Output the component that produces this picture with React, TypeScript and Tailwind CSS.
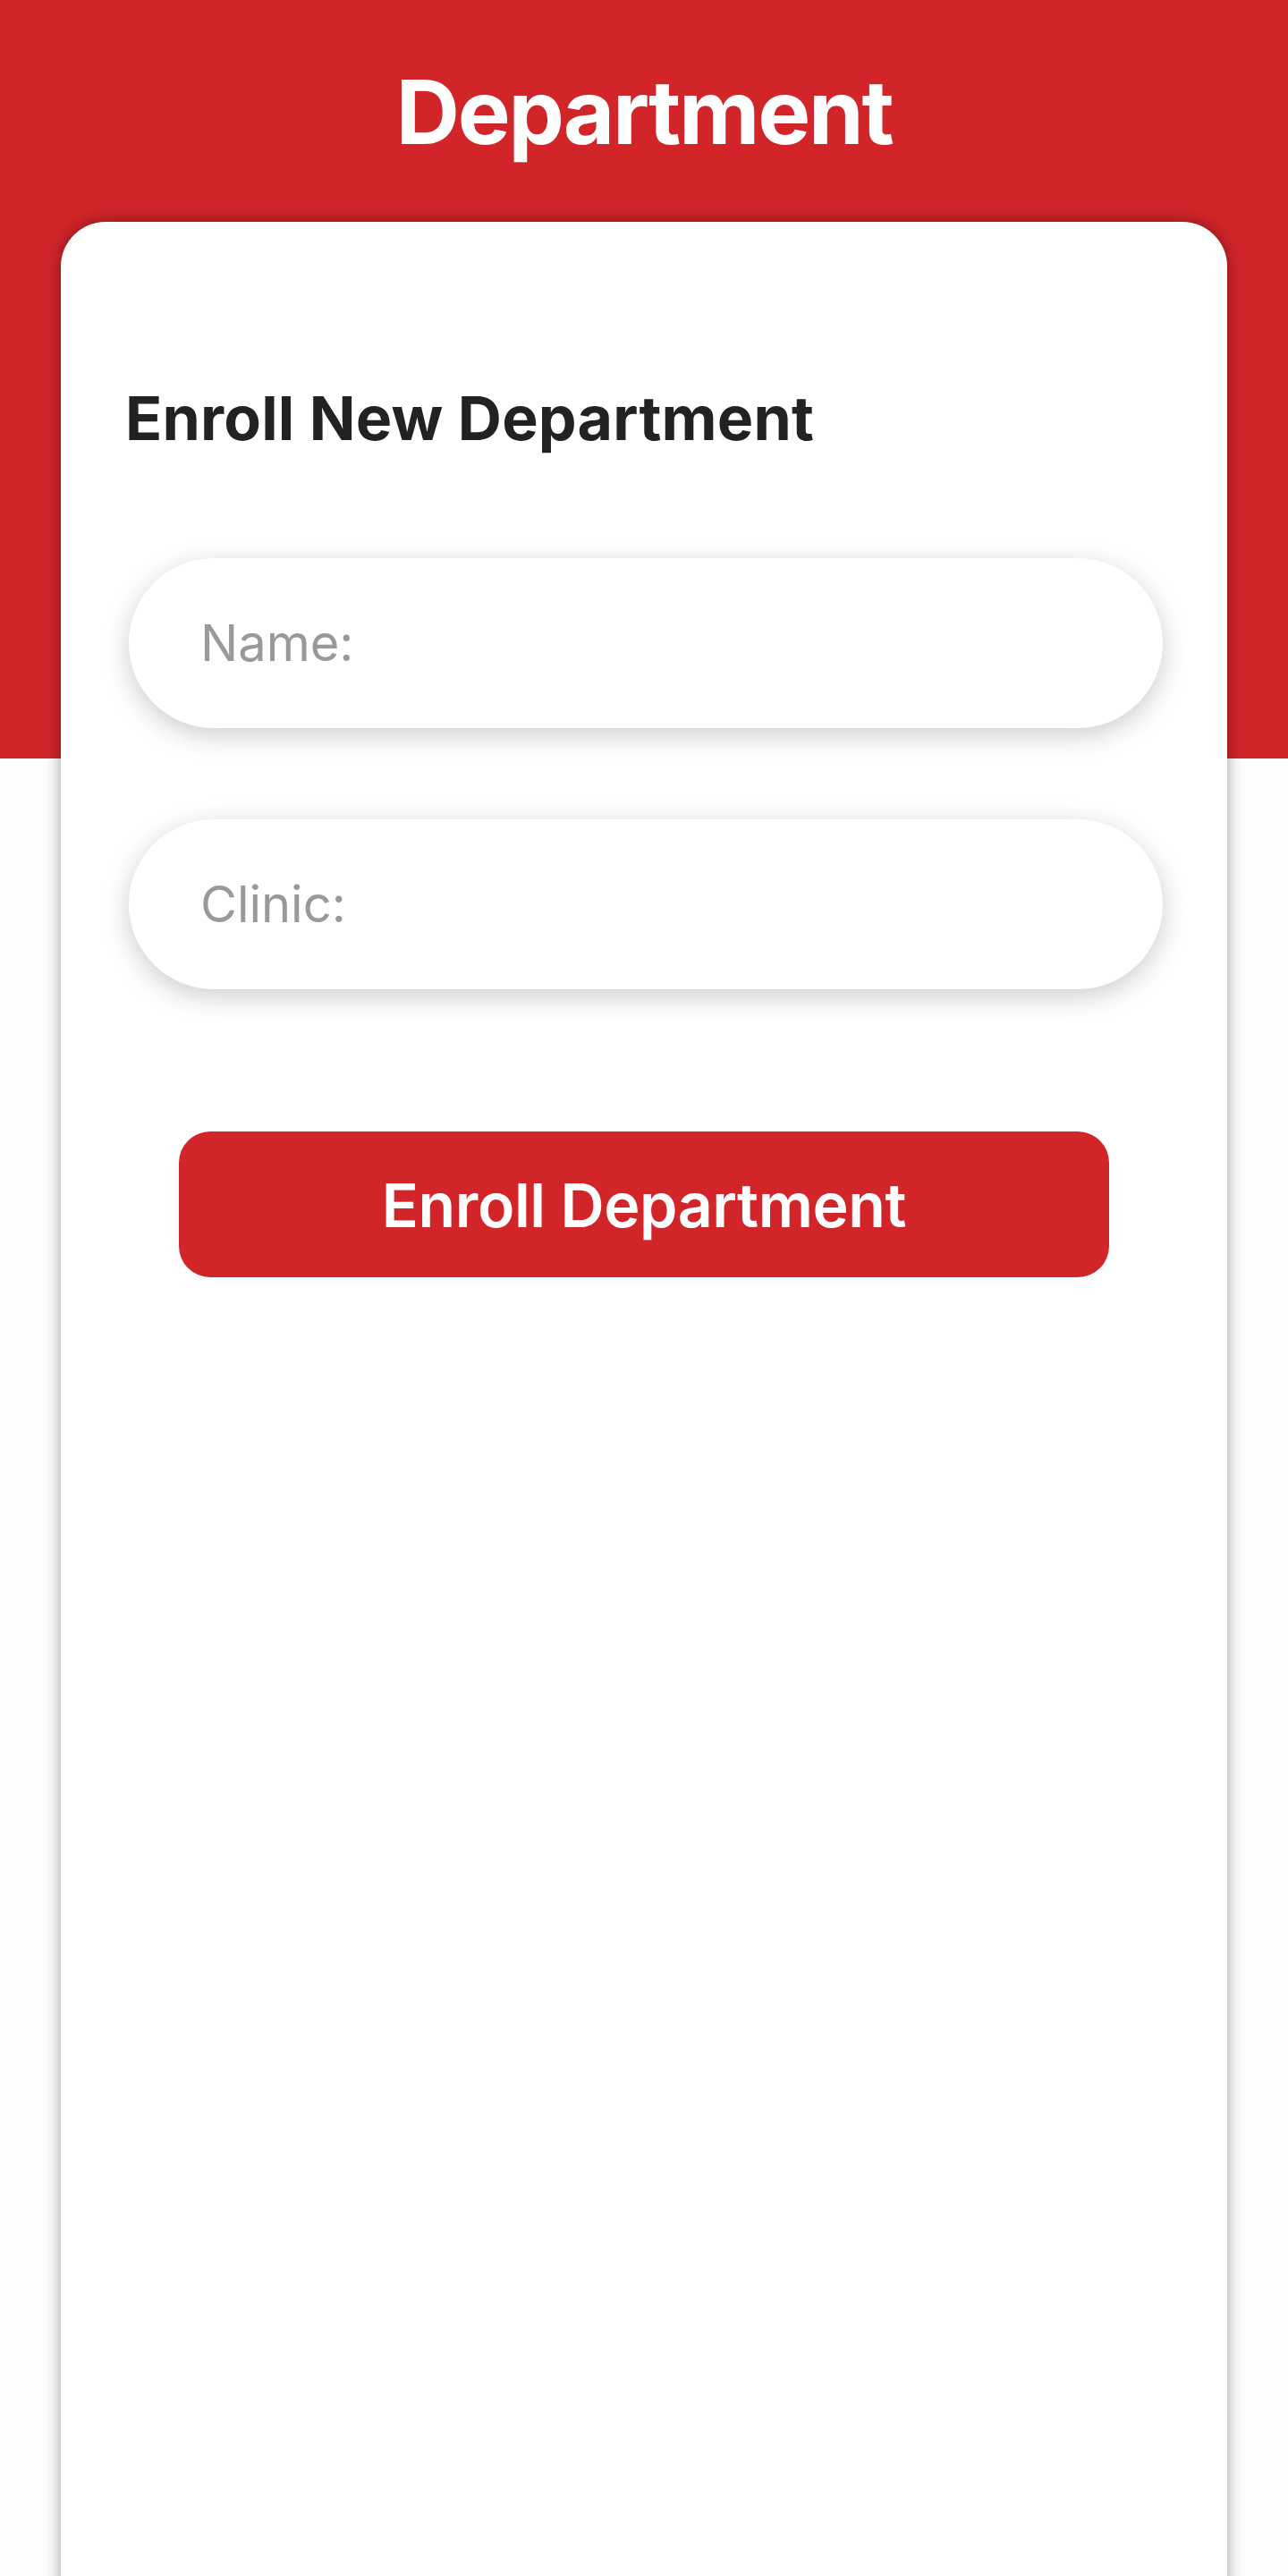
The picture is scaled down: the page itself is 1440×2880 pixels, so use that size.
import React from "react";

export default function App() {
  const font = { fontFamily: "Inter, 'Noto Sans', sans-serif" };
  return (
    <div className="h-[2880px] w-full overflow-hidden bg-[#fefefe]" style={font}>
      <div className="h-[848px] bg-[#d2252a] pt-[75px]">
        <h1 className="text-center text-[99px] font-bold leading-[100px] tracking-[-2.2px] text-white">
          Department
        </h1>
      </div>
      <div className="mx-[68px] -mt-[600px] min-h-[2700px] rounded-t-[50px] bg-white px-[74px] pt-[185px] shadow-[0_0_18px_rgba(0,0,0,0.4)]">
        <h2 className="-ml-[2px] text-[68px] font-bold leading-[68px] tracking-[0.2px] text-[#222222]">
          Enroll New Department
        </h2>
        <div className="mt-[123px] flex flex-col gap-[102px] pl-[2px]">
          <div className="flex h-[190px] w-[1156px] items-center rounded-full bg-white pl-[80px] shadow-[0_8px_30px_rgba(0,0,0,0.2)]">
            <span className="text-[56px] leading-none text-[#999999]">Name:</span>
          </div>
          <div className="flex h-[190px] w-[1156px] items-center rounded-full bg-white pl-[80px] shadow-[0_8px_30px_rgba(0,0,0,0.2)]">
            <span className="text-[56px] leading-none text-[#999999]">Clinic:</span>
          </div>
        </div>
        <div className="mt-[159px] flex justify-center">
          <button className="flex h-[163px] w-[1040px] items-center justify-center rounded-[35px] bg-[#d2252a] text-[68px] font-semibold leading-none tracking-[-0.4px] text-white">
            Enroll Department
          </button>
        </div>
      </div>
    </div>
  );
}
